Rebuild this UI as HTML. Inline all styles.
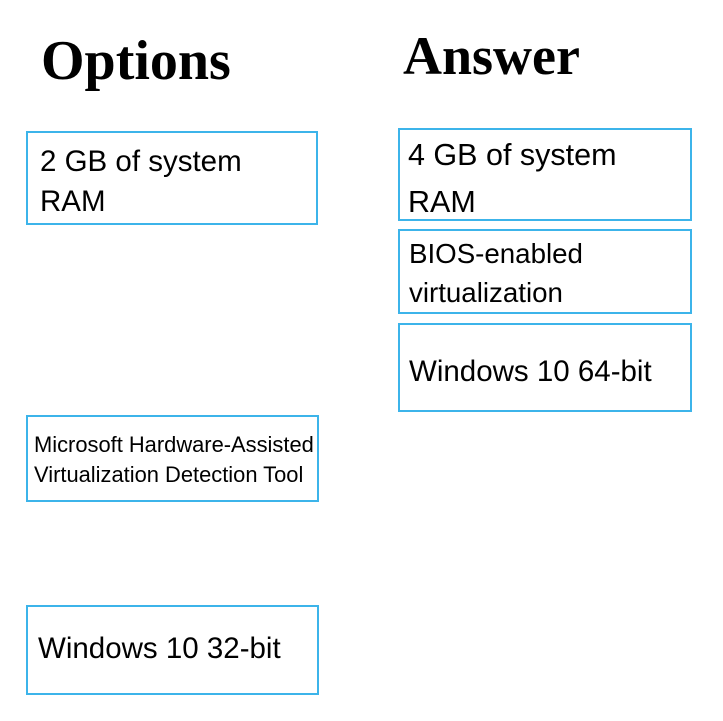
<!DOCTYPE html><html><head><style>
body{margin:0;width:723px;height:721px;background:#fff;position:relative;overflow:hidden;font-family:"Liberation Sans",sans-serif;color:#000}
.h{position:absolute;font-family:"Liberation Serif",serif;font-weight:bold;line-height:1}
.b{position:absolute;box-sizing:border-box;border:2px solid #3cb4ea;padding-left:12px;font-size:29.5px;line-height:40px;white-space:nowrap}
</style></head><body>
<div class="h" style="left:41px;top:33px;font-size:56px">Options</div>
<div class="h" style="left:403px;top:29px;font-size:54px">Answer</div>
<div class="b" style="left:26px;top:131px;width:292px;height:94px;padding-top:9px;font-size:29.5px">2 GB of system<br>RAM</div>
<div class="b" style="left:26px;top:415px;width:293px;height:87px;font-size:21.9px;line-height:30px;padding-left:6px;padding-top:13px">Microsoft Hardware-Assisted<br>Virtualization Detection Tool</div>
<div class="b" style="left:26px;top:605px;width:293px;height:90px;padding-top:22px;padding-left:10px">Windows 10 32-bit</div>
<div class="b" style="left:398px;top:128px;width:294px;height:93px;font-size:30.5px;line-height:47px;padding-left:8px;padding-top:2px">4 GB of system<br>RAM</div>
<div class="b" style="left:398px;top:229px;width:294px;height:85px;padding-left:9px;padding-top:3px;line-height:39px;font-size:27.7px">BIOS-enabled<br>virtualization</div>
<div class="b" style="left:398px;top:323px;width:294px;height:89px;padding-left:9px;padding-top:27px;line-height:40px">Windows 10 64-bit</div>
</body></html>
